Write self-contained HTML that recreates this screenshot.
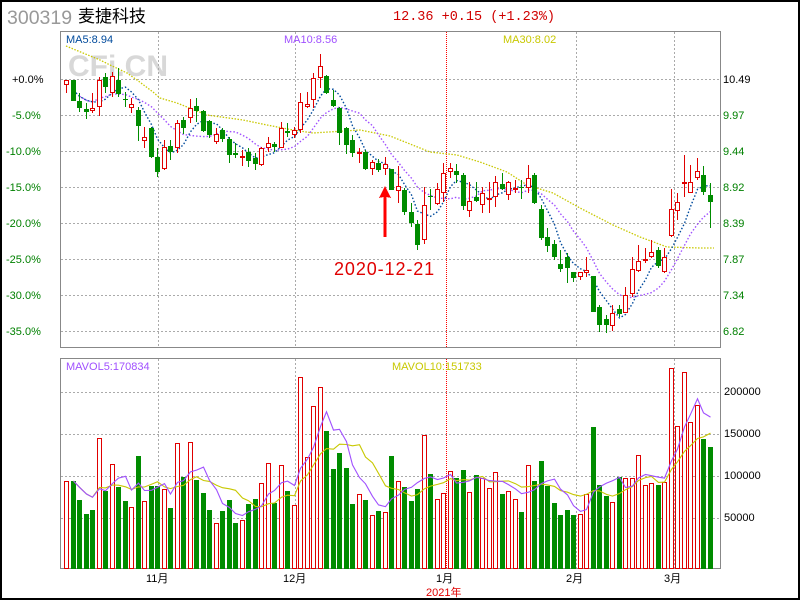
<!DOCTYPE html>
<html><head><meta charset="utf-8">
<style>
html,body{margin:0;padding:0;background:#fff;}
#w{position:relative;width:800px;height:600px;overflow:hidden;}
svg text{font-family:"Liberation Sans","Noto Sans CJK SC",sans-serif;}
</style></head>
<body><div id="w">
<svg id="s" width="800" height="600" xmlns="http://www.w3.org/2000/svg" shape-rendering="crispEdges">
<rect x="1" y="1" width="798" height="598" fill="#fff" stroke="#000" stroke-width="2"/>
<text x="7" y="24" font-size="19.5" fill="#999">300319</text>
<text x="78" y="22" font-size="17" fill="#000" style="font-family:'Noto Sans CJK SC',sans-serif">麦捷科技</text>
<text x="393" y="20" font-size="13.5" fill="#d00000" style="font-family:'Liberation Mono',monospace">12.36 +0.15 (+1.23%)</text>
<text x="68" y="76" font-size="30" font-weight="bold" fill="#d8d8d8">CFi.CN</text>
<g id="grid"></g>
<rect x="60.5" y="31.5" width="660" height="316" fill="none" stroke="#888"/>
<rect x="60.5" y="358.5" width="660" height="210" fill="none" stroke="#888"/>
<g id="ma30"></g><g id="cd"></g><g id="vol"></g>
<text x="66" y="43" font-size="11" fill="#004a9c">MA5:8.94</text>
<text x="284" y="43" font-size="11" fill="#a050ff">MA10:8.56</text>
<text x="503" y="43" font-size="11" fill="#c8c800">MA30:8.02</text>
<text x="66" y="370" font-size="11" fill="#a050ff">MAVOL5:170834</text>
<text x="392" y="370" font-size="11" fill="#c8c800">MAVOL10:151733</text>
<g font-size="11">
<text x="12" y="83" fill="#000">+0.0%</text>
<text x="12" y="119" fill="#008000">-5.0%</text>
<text x="6" y="155" fill="#008000">-10.0%</text>
<text x="6" y="191" fill="#008000">-15.0%</text>
<text x="6" y="227" fill="#008000">-20.0%</text>
<text x="6" y="263" fill="#008000">-25.0%</text>
<text x="6" y="299" fill="#008000">-30.0%</text>
<text x="6" y="335" fill="#008000">-35.0%</text>
<text x="723" y="83" fill="#000">10.49</text>
<text x="723" y="119" fill="#008000">9.97</text>
<text x="723" y="155" fill="#008000">9.44</text>
<text x="723" y="191" fill="#008000">8.92</text>
<text x="723" y="227" fill="#008000">8.39</text>
<text x="723" y="263" fill="#008000">7.87</text>
<text x="723" y="299" fill="#008000">7.34</text>
<text x="723" y="335" fill="#008000">6.82</text>
<text x="724" y="395" fill="#000">200000</text>
<text x="724" y="437" fill="#000">150000</text>
<text x="724" y="479" fill="#000">100000</text>
<text x="724" y="521" fill="#000">50000</text>
<text x="146" y="582" fill="#000">11月</text>
<text x="283" y="582" fill="#000">12月</text>
<text x="436" y="582" fill="#000">1月</text>
<text x="566" y="582" fill="#000">2月</text>
<text x="664" y="582" fill="#000">3月</text>
<text x="426" y="596" fill="#e00000">2021年</text>
</g>
<polygon points="385,186 379,198 383.5,197 383.5,237 386.5,237 386.5,197 391,198" fill="#ff0000"/>
<text x="334" y="275" font-size="18" fill="#e00000" letter-spacing="0.9">2020-12-21</text>
</svg>
</div>
<script>
var NS="http://www.w3.org/2000/svg";
function el(p,t,a){var e=document.createElementNS(NS,t);for(var k in a)e.setAttribute(k,a[k]);p.appendChild(e);return e;}
var g=document.getElementById('grid');
[79,115,151,187,223,259,295,331].forEach(function(y){el(g,'line',{x1:61,x2:720,y1:y+.5,y2:y+.5,stroke:'#aaa','stroke-dasharray':'2,2'});});
[392,434,476,518].forEach(function(y){el(g,'line',{x1:61,x2:720,y1:y+.5,y2:y+.5,stroke:'#aaa','stroke-dasharray':'2,2'});});
[158,295,576,674].forEach(function(x){el(g,'line',{x1:x+.5,x2:x+.5,y1:32,y2:347,stroke:'#aaa','stroke-dasharray':'2,2'});el(g,'line',{x1:x+.5,x2:x+.5,y1:359,y2:568,stroke:'#aaa','stroke-dasharray':'2,2'});});
el(g,'line',{x1:446.5,x2:446.5,y1:32,y2:347,stroke:'#f00','stroke-dasharray':'1,1'});
el(g,'line',{x1:446.5,x2:446.5,y1:359,y2:568,stroke:'#f00','stroke-dasharray':'1,1'});
var A=[[60,73,60,100,1],[60,122,60,122,0],[123,145,100,155,0],[147,157,130,177,0],[145,150,100,160,1],[60,137,50,167,1],[52,80,40,100,0],[48,95,35,112,1],[60,102,25,110,0],[116,118,95,140,0],[132,142,115,160,1],[150,197,140,242,0],[232,241,200,265,1],[204,290,200,295,0],[292,335,265,350,0],[262,325,240,330,1],[258,276,240,300,0],[190,260,180,280,1],[180,204,170,222,0],[145,170,118,190,1],[138,152,115,185,0],[153,212,150,215,0],[183,226,180,235,0],[222,242,205,252,1],[210,238,205,245,0],[237,284,230,310,0],[280,285,250,295,0],[288,292,270,318,1],[275,302,265,320,0],[293,313,280,330,0],[264,313,260,318,1],[250,260,230,275,1],[252,262,245,275,0],[205,260,185,265,1],[212,220,190,230,0],[210,222,200,235,1],[127,208,100,220,1],[132,138,95,145,1],[55,117,40,145,1],[18,52,-18,85,1],[48,98,45,102,0],[120,137,90,140,0],[143,218,140,255,0],[204,254,200,282,0],[240,280,225,292,0],[276,279,265,310,1],[276,328,270,330,0],[307,325,300,345,1],[308,330,298,335,0],[313,325,292,345,1]];
var B=[[87,150,87,150,0],[138,150,78,190,1],[150,215,145,225,0],[215,248,190,260,0],[252,315,240,330,0],[195,298,140,312,1],[168,171,148,210,0],[148,190,130,195,1],[100,155,70,185,1],[85,92,70,115,1],[93,104,72,130,0],[105,197,100,210,0],[183,211,125,230,1],[171,182,125,185,0],[160,193,140,220,1],[175,178,125,220,1],[127,167,108,200,1],[131,147,98,150,0],[127,163,123,180,1],[143,147,120,160,1],[140,143,120,177,0],[115,142,75,160,1],[105,190,100,192,0],[207,293,195,300,0],[292,318,265,335,0],[312,350,300,360,0],[372,387,330,395,0],[350,383,340,430,0],[397,415,395,425,0],[397,408,395,420,1],[390,395,352,410,1],[408,515,408,515,0],[500,555,495,575,0],[537,555,525,580,0],[520,555,495,572,1],[508,523,495,530,0],[465,517,440,518,1],[388,460,350,470,1],[363,390,315,395,1],[356,360,325,370,1],[337,348,300,355,1],[330,377,322,383,0],[352,393,325,398,1],[207,285,148,290,1],[186,210,160,240,1],[127,130,45,170,1],[127,156,75,160,1],[93,111,55,120,1],[105,155,78,165,0],[165,185,130,265,0]];
var C=[];
A.forEach(function(a){C.push([60+a[0]/3,60+a[1]/3,60+a[2]/3,60+a[3]/3,a[4]]);});
B.forEach(function(a){C.push([140+a[0]/3,140+a[1]/3,140+a[2]/3,140+a[3]/3,a[4]]);});
var cd=document.getElementById('cd');
function L(i){return Math.round(64+6.5*i);}
function cx(i){return L(i)+2.5;}
C.forEach(function(c,i){var l=L(i);var R=c[4];var col=R?'#e00000':'#008c00';
 var t=Math.round(c[0]),b=Math.round(c[1]);if(b-t<1)b=t+1;
 el(cd,'rect',{x:l+2,y:Math.round(c[2]),width:1,height:Math.max(1,Math.round(c[3])-Math.round(c[2])),fill:col});
 if(R){el(cd,'rect',{x:l+.5,y:t+.5,width:4,height:Math.max(1,b-t),fill:'#fff',stroke:col,'stroke-width':1});}
 else el(cd,'rect',{x:l,y:t,width:5,height:b-t,fill:col});
});
var close=C.map(function(c){return c[4]?c[0]:c[1];});
function ma(arr,n){return arr.map(function(v,i){var s=0,k=0;for(var j=Math.max(0,i-n+1);j<=i;j++){s+=arr[j];k++;}return s/k;});}
function dots(p,arr,col,start){var d='';arr.forEach(function(v,i){if(i>=start)d+=(d?'L':'M')+cx(i)+','+v.toFixed(1);});el(p,'path',{d:d,fill:'none',stroke:col,'stroke-width':1.4,'stroke-dasharray':'1.5,2','shape-rendering':'auto'});}
var m=document.getElementById('ma30');
el(m,'polyline',{points:'66,46 83,53 100,60 110,65 127,73 137,80 153,92 160,98 177,103 207,115 243,120 267,125 293,130 313,133 360,130 390,136 400,140 430,152 457,155 480,162 507,172 527,185 553,193 580,208 613,225 640,237 667,247 700,248 714,248',fill:'none',stroke:'#c8c800','stroke-width':1.3,'stroke-dasharray':'1.5,1.5','shape-rendering':'auto'});
dots(m,ma(close,10),'#a050ff',2);
dots(m,ma(close,5),'#004a9c',1);
var V1=[[453,1],[453,0],[510,0],[552,0],[540,0],[325,1],[483,0],[403,1],[471,0],[513,0],[532,1],[378,0],[514,1],[467,0],[467,0],[478,1],[534,0],[340,1],[440,0],[337,1],[450,0],[489,0],[540,0],[580,1],[543,0],[510,0],[579,0],[571,1],[522,0],[507,0],[460,1],[400,1],[518,0],[406,1],[483,0],[525,1],[142,1],[381,1],[229,1],[172,1],[303,0],[417,0],[369,0],[413,0],[522,0],[493,1],[510,0],[556,1],[543,0],[547,1],[378,0],[453,1]];
var V2=[[410,0],[452,0],[416,0],[255,1],[372,0],[447,1],[430,1],[364,1],[383,0],[360,0],[427,1],[375,0],[383,1],[414,1],[367,1],[432,0],[423,1],[447,1],[486,0],[345,1],[393,0],[332,0],[407,0],[459,0],[495,0],[480,0],[495,0],[492,1],[432,1],[230,0],[405,0],[437,0],[457,1],[381,0],[383,1],[383,1],[315,1],[405,1],[400,1],[405,0],[397,1],[55,1],[229,1],[67,1],[216,1],[165,1],[267,0],[291,0]];
var V=[];V1.forEach(function(v){V.push([330+v[0]/3,v[1]]);});V2.forEach(function(v){V.push([350+v[0]/3,v[1]]);});
var vg=document.getElementById('vol');
V.forEach(function(v,i){var l=L(i);var t=Math.round(v[0]);
 if(v[1])el(vg,'rect',{x:l+.5,y:t+.5,width:4,height:568-t,fill:'#fff',stroke:'#e00000','stroke-width':1});
 else el(vg,'rect',{x:l,y:t,width:5,height:569-t,fill:'#008c00'});});
var vy=V.map(function(v){return v[0];});
function line(p,arr,col,start){var d='';arr.forEach(function(v,i){if(i>=start)d+=(d?'L':'M')+cx(i)+','+v.toFixed(1);});el(p,'path',{d:d,fill:'none',stroke:col,'stroke-width':1.1,'shape-rendering':'auto'});}
line(vg,ma(vy,10),'#c8c800',1);
line(vg,ma(vy,5),'#a050ff',1);
</script>
</body></html>
